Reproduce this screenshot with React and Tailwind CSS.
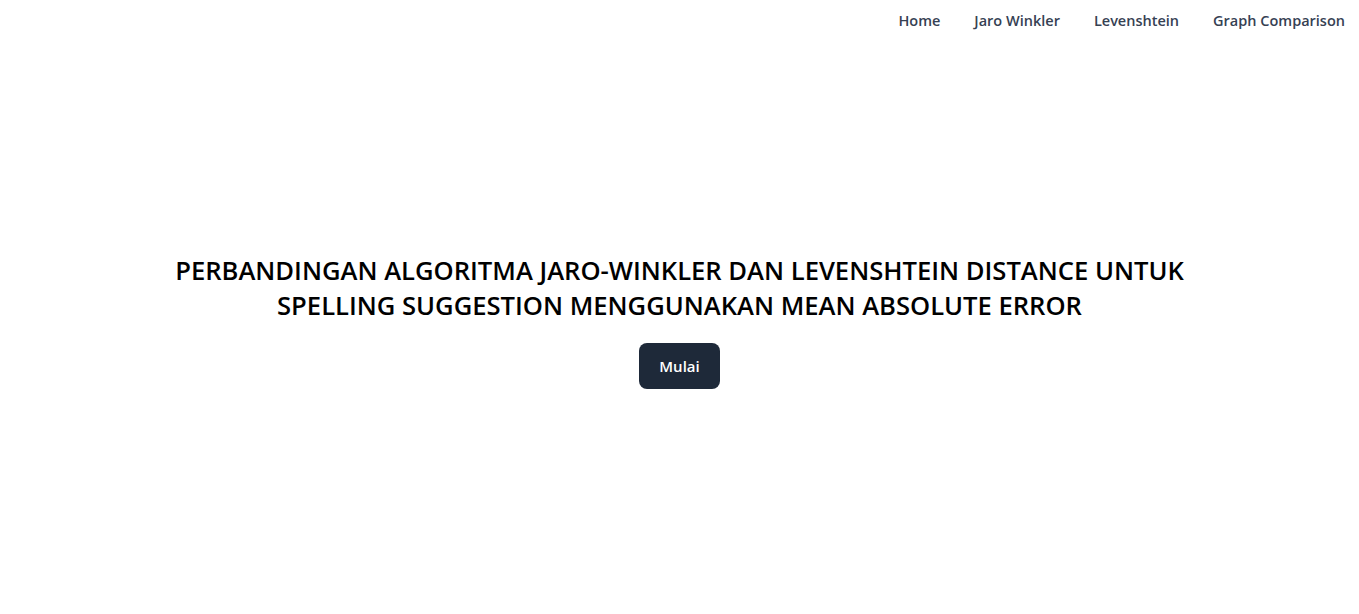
export default function App() {
  const links = ['Home', 'Jaro Winkler', 'Levenshtein', 'Graph Comparison'];
  return (
    <div className="h-screen flex flex-col bg-white" style={{ fontFamily: '"Open Sans", "Noto Sans", sans-serif' }}>
      <nav className="flex justify-end items-center h-10 pr-[14px]">
        <ul className="flex gap-[34px]">
          {links.map((l) => (
            <li key={l}>
              <a href="#" className="text-[14.5px] font-semibold text-gray-700">{l}</a>
            </li>
          ))}
        </ul>
      </nav>
      <main className="flex-1 flex flex-col items-center justify-center pb-3">
        <h1 className="max-w-[1060px] text-center text-[25.6px] font-semibold leading-[35px] text-black">
          PERBANDINGAN ALGORITMA JARO-WINKLER DAN LEVENSHTEIN DISTANCE UNTUK SPELLING SUGGESTION MENGGUNAKAN MEAN ABSOLUTE ERROR
        </h1>
        <button className="mt-5 h-[46px] px-5 rounded-lg bg-gray-800 text-white text-[15px] font-semibold">
          Mulai
        </button>
      </main>
    </div>
  );
}
